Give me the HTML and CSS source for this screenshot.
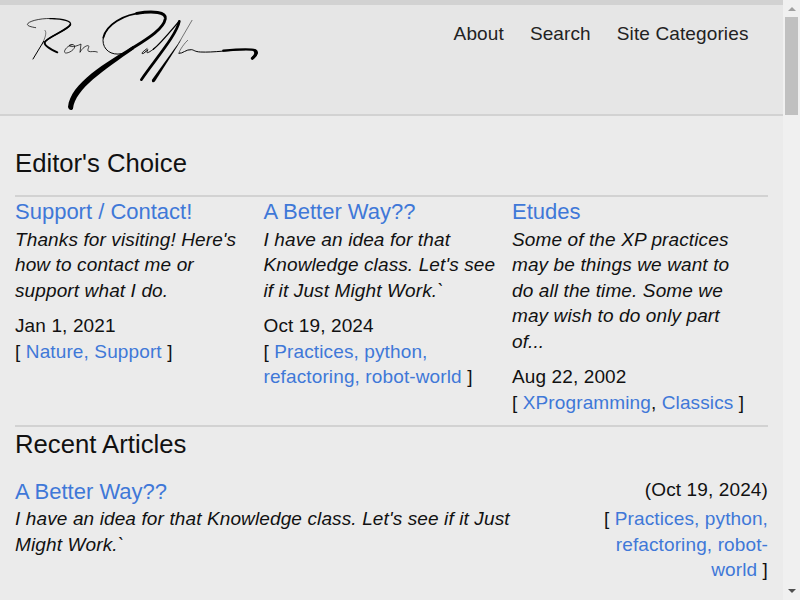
FILE: index.html
```
<!DOCTYPE html>
<html lang="en">
<head>
  <meta charset="UTF-8" />
  <meta name="viewport" content="width=device-width, initial-scale=1.0" />
  <title>Ron Jeffries</title>
  <link rel="stylesheet" href="styles.css">
</head>
<body>
  <div class="page">
    <header class="site-header">
      <a class="logo" href="#" aria-label="Home">
        <svg viewBox="0 15 780 327" width="260" height="109">
          <!-- first name -->
          <path class="ink w2" d="M107 83 C88 80 78 76 84 70 C93 61 130 53 165 56" />
          <path class="ink w4" d="M150 56 C190 55 216 64 211 74 C204 90 140 112 134 127" />
          <path class="ink w5" d="M211 74 C204 90 140 112 134 127 C132 136 150 147 172 157" />
          <path class="ink w1" d="M135 91 C142 98 134 115 127 132" />
          <path class="ink w3" d="M131 124 L99 177" />
          <path class="ink w2" d="M217 134 C205 135 191 150 194 157 C198 164 222 152 224 141 C225 132 212 132 207 137 C216 144 236 136 243 132 L240 157 C246 145 258 136 265 137 C270 140 259 151 266 154 C273 157 282 152 292 156" />
          <!-- big J -->
          <path class="ink w3" d="M365 161 C332 168 309 148 309 121 C310 101 325 81 344 67" />
          <path class="ink w5" d="M310 113 C318 76 370 42 430 38" />
          <path class="ink w8" d="M410 40 C460 32 499 36 496 56 C490 90 432 122 387 151" />
          <path class="fill" d="M400 137 C320 187 211 248 204 321 C206 331 216 332 219 326 C226 266 312 211 402 147 Z" />
          <!-- last name -->
          <path class="ink w3" d="M441 146 C434 151 424 158 427 161 C431 162 438 153 444 149 C436 161 442 162 462 146" />
          <path class="ink w4" d="M460 148 C484 128 512 93 537 64" />
          <path class="ink w7" d="M538 64 C531 103 466 178 424 239" />
          <path class="ink w1" d="M576 61 L537 128" />
          <path class="fill" d="M545 116 L456 239 C454 247 461 249 465 244 L533 137 Z" />
          <path class="ink w1" d="M563 121 C557 125 535 154 537 160" />
          <path class="ink w3" d="M537 160 C548 162 558 147 575 149 C582 150 584 155 601 156 C640 158 690 150 735 149" />
          <path class="ink w6" d="M670 152 C705 149 750 146 766 151 C774 156 771 165 758 174" />
          <path class="ink w9" d="M765 153 C770 160 766 168 757 175" />
        </svg>
      </a>
      <nav class="site-nav">
        <a href="#">About</a>
        <a href="#">Search</a>
        <a href="#">Site Categories</a>
      </nav>
    </header>

    <main class="content">
      <h2 class="choice-title">Editor's Choice</h2>
      <section class="choices">
        <article class="choice">
          <h3><a href="#">Support / Contact!</a></h3>
          <p class="summary">Thanks for visiting! Here's how to contact me or support what I do.</p>
          <p class="date">Jan 1, 2021</p>
          <p class="tags">[ <a href="#">Nature, Support</a> ]</p>
        </article>
        <article class="choice">
          <h3><a href="#">A Better Way??</a></h3>
          <p class="summary">I have an idea for that Knowledge class. Let's see if it Just Might Work.`</p>
          <p class="date">Oct 19, 2024</p>
          <p class="tags">[ <a href="#">Practices, python, refactoring, robot-world</a> ]</p>
        </article>
        <article class="choice">
          <h3><a href="#">Etudes</a></h3>
          <p class="summary">Some of the XP practices may be things we want to do all the time. Some we may wish to do only part of...</p>
          <p class="date">Aug 22, 2002</p>
          <p class="tags">[ <a href="#">XProgramming</a>, <a href="#">Classics</a> ]</p>
        </article>
      </section>

      <h2 class="recent-title">Recent Articles</h2>
      <article class="recent">
        <div class="recent-text">
          <h3><a href="#">A Better Way??</a></h3>
          <p class="summary">I have an idea for that Knowledge class. Let's see if it Just Might Work.`</p>
        </div>
        <div class="recent-meta">
          <p class="recent-date">(Oct 19, 2024)</p>
          <p class="tags">[ <a href="#">Practices, python, refactoring, robot-world</a> ]</p>
        </div>
      </article>
    </main>
  </div>

  <div class="scrollbar">
    <span class="arrow-up"></span>
    <span class="thumb"></span>
    <span class="arrow-down"></span>
  </div>
</body>
</html>
```
FILE: styles.css
```
* {
  margin: 0;
  padding: 0;
  box-sizing: border-box;
}
body {
  display: flex;
  height: 600px;
  overflow: hidden;
  background: #ebebeb;
  color: #111;
  font-family: "Liberation Sans", Arial, sans-serif;
  font-size: 19px;
  line-height: 25.6px;
  letter-spacing: 0.12px;
}
a {
  color: #3f78d8;
  text-decoration: none;
}
.page {
  width: 783px;
  height: 600px;
  overflow: hidden;
}

/* header */
.site-header {
  display: flex;
  justify-content: space-between;
  height: 116px;
  border-top: 5px solid #d2d2d2;
  border-bottom: 2px solid #d2d2d2;
  background: #e6e6e6;
}
.logo svg {
  display: block;
}
.ink {
  fill: none;
  stroke: #000;
  stroke-linecap: round;
  stroke-linejoin: round;
}
.fill { fill: #000; }
.w1 { stroke-width: 1.5; }
.w2 { stroke-width: 2.2; }
.w3 { stroke-width: 3; }
.w4 { stroke-width: 4; }
.w5 { stroke-width: 5.5; }
.w6 { stroke-width: 7; }
.w7 { stroke-width: 8; }
.w8 { stroke-width: 8.5; }
.w9 { stroke-width: 9; }
.site-nav {
  display: flex;
  gap: 26px;
  padding: 16px 34.5px 0 0;
}
.site-nav a {
  color: #222;
}

/* articles */
.content {
  padding: 30px 15px 0;
}
h2 {
  font-size: 25.7px;
  font-weight: normal;
  line-height: 34px;
  letter-spacing: 0;
}
h3 {
  font-size: 22px;
  font-weight: normal;
  line-height: 30px;
  letter-spacing: 0;
}
.choices {
  display: flex;
  height: 232px;
  margin-top: 15px;
  border-top: 2px solid #d2d2d2;
  border-bottom: 2px solid #d2d2d2;
}
.choice {
  width: 33%;
  padding-right: 12px;
}
.summary {
  font-style: italic;
}
.choice .summary {
  margin-top: -0.3px;
}
.date {
  margin-top: 9.5px;
}
.recent {
  display: flex;
  justify-content: space-between;
  margin-top: 16px;
}
.recent-text {
  width: 520px;
}
.recent-text h3 {
  line-height: 29px;
}
.recent-meta {
  width: 170px;
  text-align: right;
}
.recent-date {
  margin-bottom: 3.5px;
}

/* scrollbar */
.scrollbar {
  display: flex;
  flex-direction: column;
  align-items: center;
  width: 17px;
  height: 600px;
  padding: 7px 0;
  background: #f0f0f0;
}
.arrow-up {
  border: 4px solid transparent;
  border-top: 0;
  border-bottom-color: #a0a0a0;
}
.thumb {
  width: 13px;
  height: 98px;
  margin-top: 6px;
  background: #c0c0c0;
}
.arrow-down {
  margin-top: auto;
  border: 4px solid transparent;
  border-bottom: 0;
  border-top-color: #505050;
}
```
